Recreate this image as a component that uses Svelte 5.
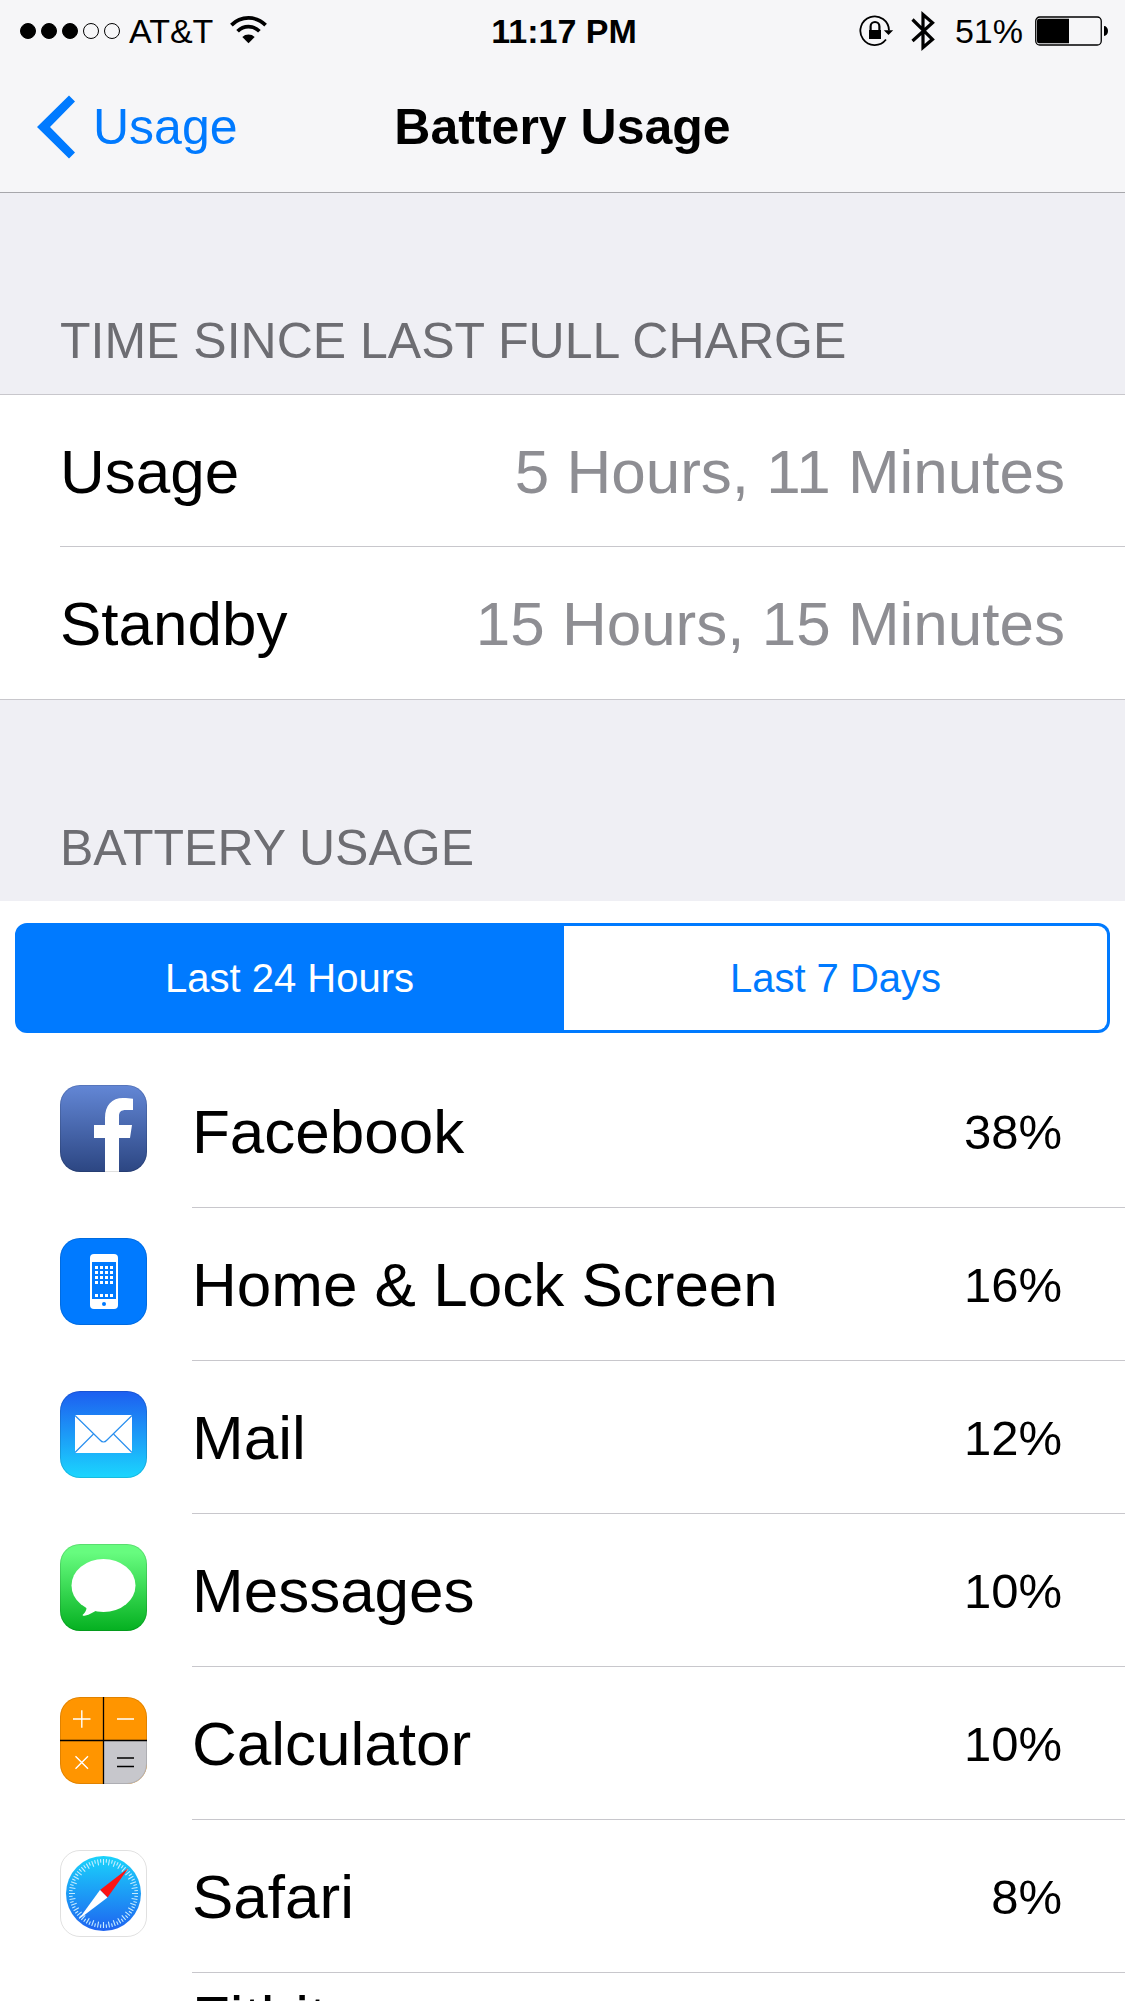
<script>
  let range = "Last 24 Hours";
  const ranges = ["Last 24 Hours", "Last 7 Days"];

  const signal = [true, true, true, false, false];

  const charge = [
    { label: "Usage", value: "5 Hours, 11 Minutes" },
    { label: "Standby", value: "15 Hours, 15 Minutes" },
  ];

  const apps = [
    { icon: "facebook", name: "Facebook", percent: 38 },
    { icon: "home", name: "Home & Lock Screen", percent: 16 },
    { icon: "mail", name: "Mail", percent: 12 },
    { icon: "messages", name: "Messages", percent: 10 },
    { icon: "calculator", name: "Calculator", percent: 10 },
    { icon: "safari", name: "Safari", percent: 8 },
  ];

  /* compass marks, every other one is longer */
  const ticks = Array.from({ length: 72 }, (_, i) => i);
  const cols = [35, 40, 45, 50];
  const rows = [28, 33, 38, 43, 56];
</script>

<div class="screen">
  <header>
    <div class="status">
      <div class="side">
        <div class="signal">
          {#each signal as on}
            <span class="dot" class:on></span>
          {/each}
        </div>
        <span class="carrier">AT&amp;T</span>
        <svg class="wifi" width="37" height="30" viewBox="0 0 37 30">
          <g fill="none" stroke="#000">
            <path d="M1.400 9.100a24 24 0 0 1 34.200 0" stroke-width="3.700" />
            <path d="M7.600 15.300a15.200 15.200 0 0 1 21.800 0" stroke-width="3.700" />
          </g>
          <path d="M12.300 21a9 9 0 0 1 12.400 0L18.500 27.200z" />
        </svg>
      </div>
      <time>11:17 PM</time>
      <div class="side right">
        <svg class="lock" width="35" height="32" viewBox="0 0 35 32">
          <g fill="none" stroke="#000">
            <path d="M30 15.500A14.300 14.300 0 1 0 27 24.500" stroke-width="1.800" />
            <path d="M11.600 16v-4.600a4.400 4.400 0 0 1 8.800 0V16" stroke-width="2.200" />
          </g>
          <path d="M10 15h12v9H10zM24.800 15.300h9.400L29.500 20z" />
        </svg>
        <svg class="bluetooth" width="24" height="42" viewBox="0 0 24 42">
          <path
            d="M1.500 9.500L21.500 29.300L12 37.500V4.500L21.500 12.700L1.500 31"
            fill="none"
            stroke="#000"
            stroke-width="3.200"
          />
        </svg>
        <span>51%</span>
        <svg class="battery" width="73" height="30" viewBox="0 0 73 30">
          <rect x=".75" y="1" width="65.500" height="28" rx="4" fill="none" stroke="#000" stroke-width="1.300" />
          <path d="M4 2.700h30v24.600H4a2 2 0 0 1-2-2V4.700a2 2 0 0 1 2-2zM69 10a4 5 0 0 1 0 10z" />
        </svg>
      </div>
    </div>
    <nav>
      <a class="back" href="#usage">
        <svg width="38" height="64" viewBox="0 0 38 64">
          <path d="M32 .500l6 6L13 32l25 25.500-6 6L0 32z" fill="#007aff" />
        </svg>
        Usage
      </a>
      <h1>Battery Usage</h1>
    </nav>
  </header>

  <main>
    <h2>TIME SINCE LAST FULL CHARGE</h2>
    <ul class="charge">
      {#each charge as { label, value }}
        <li><span>{label}</span><span class="value">{value}</span></li>
      {/each}
    </ul>

    <h2>BATTERY USAGE</h2>
    <div class="usage">
      <div class="segments">
        {#each ranges as r}
          <button type="button" class:active={range === r} aria-pressed={range === r} on:click={() => (range = r)}>
            {r}
          </button>
        {/each}
      </div>

      <ul class="apps">
        {#each apps as { icon, name, percent }}
          <li>
            <svg class="icon" width="87" height="87" viewBox="0 0 87 87">
              <defs>
                <clipPath id="clip-{icon}"><rect width="87" height="87" rx="20" /></clipPath>
                <linearGradient id="fb" x2="0" y2="1">
                  <stop stop-color="#6387d6" /><stop offset="1" stop-color="#2c4682" />
                </linearGradient>
                <linearGradient id="ml" x2="0" y2="1">
                  <stop stop-color="#1d5ef0" /><stop offset="1" stop-color="#1bd6fe" />
                </linearGradient>
                <linearGradient id="ms" x2="0" y2="1">
                  <stop offset=".1" stop-color="#67fc7f" /><stop offset="1" stop-color="#04b020" />
                </linearGradient>
                <linearGradient id="sf" x2="0" y2="1">
                  <stop stop-color="#1ad3fb" /><stop offset="1" stop-color="#1f64f0" />
                </linearGradient>
              </defs>
              <g clip-path="url(#clip-{icon})">
                {#if icon === "facebook"}
                  <rect width="87" height="87" fill="url(#fb)" />
                  <path
                    d="M45 87V53H34V40h11V33c0-13 7-20 18-20 4 0 7 .3 10 .8V25h-7c-5 0-7 2-7 6v9h13l-2 13H59v34z"
                    fill="#fff"
                  />
                {:else if icon === "home"}
                  <rect width="87" height="87" fill="#007aff" />
                  <rect x="30" y="16" width="28" height="55" rx="4" fill="#fff" />
                  <rect x="32" y="24" width="24" height="37" fill="#007aff" />
                  {#each rows as y}
                    {#each cols as x}
                      <rect {x} {y} width="3" height="3" fill="#fff" />
                    {/each}
                  {/each}
                  <circle cx="44" cy="66" r="2" fill="#007aff" />
                {:else if icon === "mail"}
                  <rect width="87" height="87" fill="url(#ml)" />
                  <rect x="15" y="24" width="57" height="38" fill="#fff" />
                  <g fill="none" stroke="#2b90ef" stroke-width="1.200">
                    <path d="M15 24.500l25 24.500q3.500 4 7 0L72 24.500" />
                    <path d="M15 61.500L33.500 43M72 61.500L53.500 43" />
                  </g>
                {:else if icon === "messages"}
                  <rect width="87" height="87" fill="url(#ms)" />
                  <ellipse cx="43.500" cy="41.500" rx="32" ry="26.500" fill="#fff" />
                  <path d="M26 61c1.500 4-.5 7.500-3.500 10 .5 1 1.500 1 3 .600 4-1 7-3 10-4.600l6-1.500L30 60z" fill="#fff" />
                {:else if icon === "calculator"}
                  <rect width="87" height="87" fill="#ff9500" />
                  <rect x="43" y="43" width="44" height="44" fill="#c7c7cc" />
                  <path d="M43.500 0v87M0 43.500h87M57 61h17M57 69.500h17" stroke="#000" stroke-width="1.300" />
                  <path
                    d="M13 22h17.500M21.800 13.300v17.500M57 22h17M15.500 59.200l12.500 12.500M28 59.200L15.500 71.700"
                    stroke="#fff"
                    stroke-width="1.400"
                  />
                {:else}
                  <rect width="87" height="87" fill="#fff" />
                  <circle cx="43.500" cy="43.500" r="37.500" fill="url(#sf)" />
                  {#each ticks as i}
                    <path
                      d={i % 2 ? "M43.500 9v3.500" : "M43.500 9v6"}
                      transform="rotate({i * 5} 43.500 43.500)"
                      stroke="#c6ecff"
                      stroke-width="1.100"
                    />
                  {/each}
                  <path d="M68.500 18L40 40l7.500 7.500z" fill="#fb1414" />
                  <path d="M18.500 69.500L40 40l7.500 7.500z" fill="#fff" />
                {/if}
              </g>
              <rect x=".5" y=".5" width="86" height="86" rx="19.500" fill="none" stroke="#000" stroke-opacity=".12" />
            </svg>
            <div class="line"><span>{name}</span><span class="percent">{percent}%</span></div>
          </li>
        {/each}
        <li class="tall"><div class="line">Fitbit</div></li>
      </ul>
    </div>
  </main>
</div>

<style>
  :global(body) {
    background: #efeff4;
  }

  .screen {
    height: 100vh;
    overflow: hidden;
    font-family: "Liberation Sans", Arial, sans-serif;
    color: #000;
    background: #efeff4;
  }

  header {
    background: #f6f6f8;
    border-bottom: 1px solid #a7a7ab;
  }

  .status {
    display: grid;
    grid-template-columns: 1fr auto 1fr;
    align-items: center;
    height: 62px;
    padding: 0 17px 0 20px;
    font-size: 34px;
    line-height: 40px;
  }

  time {
    font-weight: bold;
  }

  .side {
    display: flex;
    align-items: center;
  }

  .right {
    justify-content: flex-end;
  }

  .signal {
    display: flex;
    gap: 5px;
    margin-right: 9px;
  }

  .dot {
    box-sizing: border-box;
    width: 16px;
    height: 16px;
    border: 1px solid #000;
    border-radius: 50%;
  }

  .dot.on {
    background: #000;
  }

  .wifi {
    margin-left: 17px;
  }

  .bluetooth {
    margin: 0 20px 0 17px;
  }

  .battery {
    margin-left: 12px;
  }

  nav {
    display: grid;
    grid-template-columns: 1fr auto 1fr;
    align-items: center;
    height: 130px;
    padding: 0 37px;
    font-size: 50px;
  }

  .back {
    display: flex;
    align-items: center;
    gap: 18px;
    color: #007aff;
    text-decoration: none;
  }

  h1 {
    margin: 0;
    font-size: 50px;
  }

  h2 {
    margin: 0;
    padding: 118px 60px 23px;
    font-size: 50px;
    font-weight: normal;
    line-height: 60px;
    color: #6d6d72;
  }

  ul {
    margin: 0;
    padding: 0;
    list-style: none;
    font-size: 62px;
    line-height: 72px;
    background: #fff;
  }

  .charge {
    border-top: 1px solid #c8c7cc;
    border-bottom: 1px solid #c8c7cc;
  }

  .charge li {
    box-sizing: border-box;
    display: flex;
    justify-content: space-between;
    align-items: center;
    height: 152px;
    margin-left: 60px;
    padding: 2px 60px 0 0;
    border-bottom: 1px solid #c8c7cc;
  }

  .charge li:last-child {
    border-bottom: none;
  }

  .value {
    color: #8e8e93;
  }

  .usage {
    background: #fff;
  }

  .segments {
    display: flex;
    padding: 22px 15px;
  }

  button {
    flex: 1;
    height: 110px;
    padding: 0;
    border: 3px solid #007aff;
    font: inherit;
    font-size: 40px;
    color: #007aff;
    background: #fff;
  }

  button:first-child {
    border-radius: 12px 0 0 12px;
  }

  button:last-child {
    border-left: none;
    border-radius: 0 12px 12px 0;
  }

  button.active {
    color: #fff;
    background: #007aff;
  }

  .apps li {
    display: flex;
    height: 153px;
    padding-left: 60px;
  }

  .icon {
    flex: none;
    margin: 30px 45px 0 0;
  }

  .line {
    box-sizing: border-box;
    flex: 1;
    display: flex;
    justify-content: space-between;
    align-items: center;
    padding: 2px 63px 0 0;
    border-bottom: 1px solid #c8c7cc;
  }

  .percent {
    font-size: 49px;
  }

  .apps .tall {
    padding-left: 192px;
  }

  .tall .line {
    align-items: flex-start;
    padding-top: 9px;
  }
</style>
